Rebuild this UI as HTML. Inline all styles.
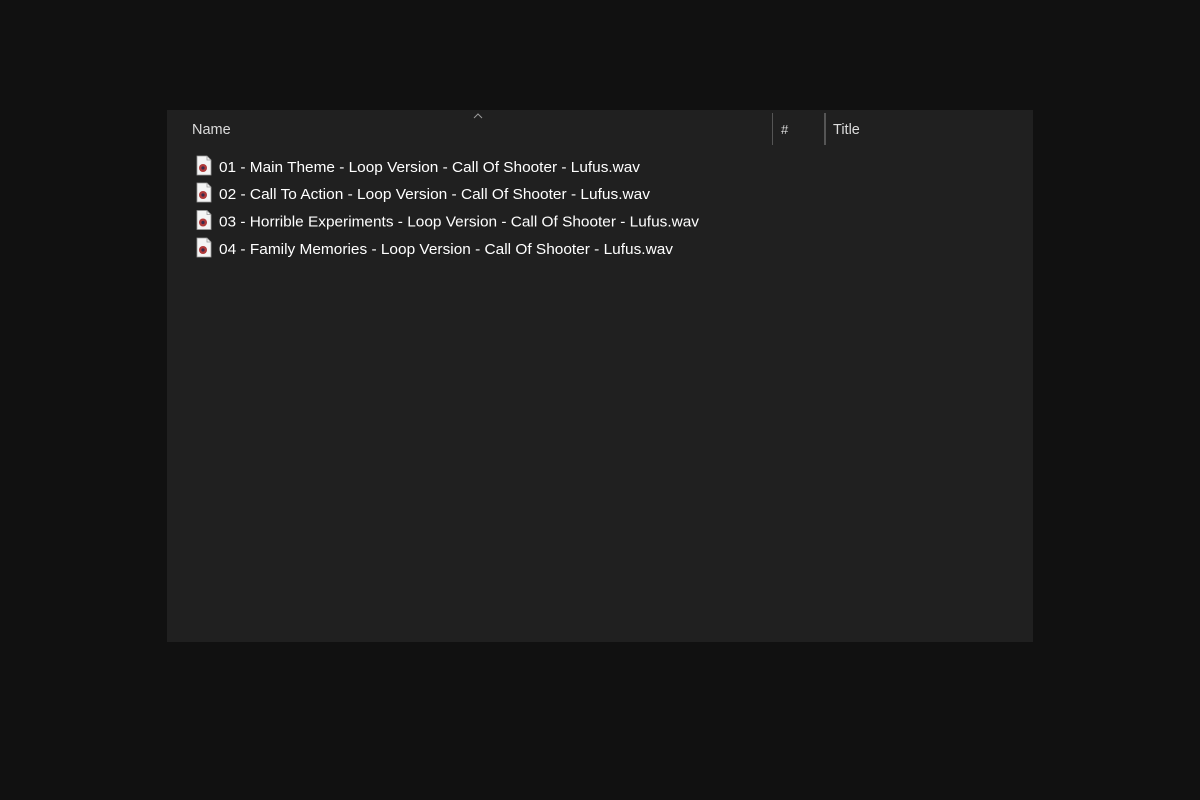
<!DOCTYPE html>
<html><head><style>
body{margin:0;background:#111111;width:1200px;height:800px;overflow:hidden}
svg{position:absolute;left:0;top:0}
</style></head><body>
<svg width="1200" height="800" xmlns="http://www.w3.org/2000/svg" font-family="Liberation Sans, sans-serif" font-size="14.5" fill="#ffffff">
<rect x="167" y="110" width="866" height="532" fill="#202020"/>
<text x="192" y="134" fill="#dcdcdc" font-size="14.5">Name</text>
<path d="M474 118 L478 114 L482 118" stroke="#9a9a9a" fill="none" stroke-width="1"/>
<rect x="772" y="113" width="1" height="32" fill="#555"/>
<rect x="824" y="113" width="2" height="32" fill="#555"/>
<text x="781" y="134" fill="#dcdcdc" font-size="13">#</text>
<text x="833" y="134" fill="#dcdcdc">Title</text>
<g id="ic">
<path d="M197 156 H207 L211 160 V175 H197 Z" fill="#f4f4f4" stroke="#999" stroke-width="0.8"/>
<path d="M207 156 V160 H211" fill="none" stroke="#999" stroke-width="0.8"/>
<circle cx="203" cy="168" r="4" fill="#b03a3a"/>
<circle cx="203" cy="168" r="1.6" fill="#3a2a4a"/>
</g>
<use href="#ic" y="27"/>
<use href="#ic" y="54.5"/>
<use href="#ic" y="82"/>
<text x="219" y="172" textLength="421" lengthAdjust="spacingAndGlyphs">01 - Main Theme - Loop Version - Call Of Shooter - Lufus.wav</text>
<text x="219" y="199" textLength="431" lengthAdjust="spacingAndGlyphs">02 - Call To Action - Loop Version - Call Of Shooter - Lufus.wav</text>
<text x="219" y="226.5" textLength="480" lengthAdjust="spacingAndGlyphs">03 - Horrible Experiments - Loop Version - Call Of Shooter - Lufus.wav</text>
<text x="219" y="254" textLength="454" lengthAdjust="spacingAndGlyphs">04 - Family Memories - Loop Version - Call Of Shooter - Lufus.wav</text>
</svg>
</body></html>
